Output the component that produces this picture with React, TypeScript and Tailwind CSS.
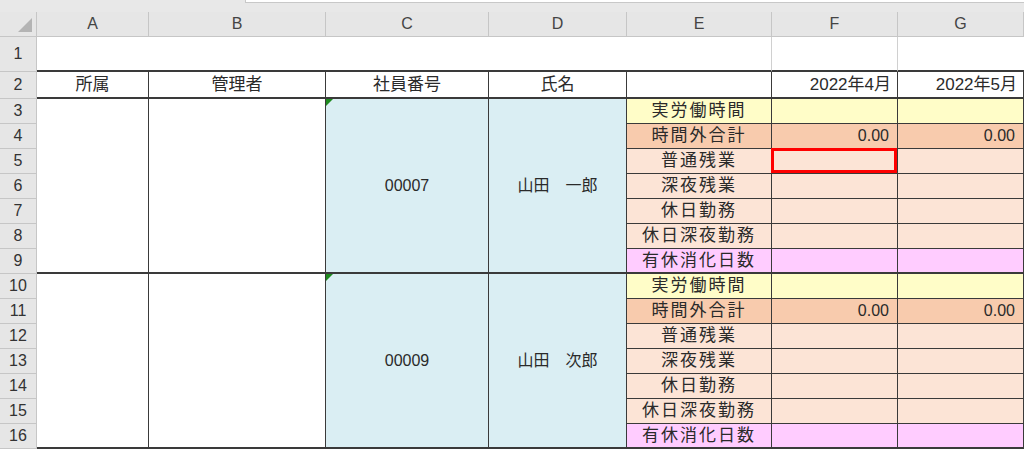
import React from "react";

const labels = ["実労働時間", "時間外合計", "普通残業", "深夜残業", "休日勤務", "休日深夜勤務", "有休消化日数"];
const bgs = ["bg-[#fffdc8]", "bg-[#f8cbad]", "bg-[#fce4d6]", "bg-[#fce4d6]", "bg-[#fce4d6]", "bg-[#fce4d6]", "bg-[#ffccff]"];

const rh = "bg-[#e6e6e6] text-[#333] flex items-center justify-center border-r border-b border-[#c6c6c6] text-[16px]";
const cell = "border-r border-b border-[#3a3a3a] flex items-center";

function Block({ start, id, name }: { start: number; id: string; name: string }) {
  const rows = [];
  for (let i = 0; i < 7; i++) {
    const last = i === 6;
    const bb = last ? "border-b-2" : "";
    rows.push(
      <React.Fragment key={i}>
        <div className={rh}>{start + i}</div>
        {i === 0 && (
          <>
            <div className={`${cell} row-span-7 bg-white border-b-2`}></div>
            <div className={`${cell} row-span-7 bg-white border-b-2`}></div>
            <div className={`${cell} row-span-7 bg-[#daeef3] border-b-2 justify-center relative`}>
              <div className="absolute left-0 top-0 w-0 h-0 border-t-[7px] border-t-[#1e8a1e] border-r-[7px] border-r-transparent" />
              {id}
            </div>
            <div className={`${cell} row-span-7 bg-[#daeef3] border-b-2 justify-center`}>{name}</div>
          </>
        )}
        <div className={`${cell} ${bgs[i]} ${bb} justify-center tracking-[2px] text-[17px]`}>{labels[i]}</div>
        <div className={`${cell} ${bgs[i]} ${bb} justify-end pr-[8px] relative`}>
          {i === 1 ? "0.00" : ""}
          {start === 3 && i === 2 && <div className="absolute -left-[1px] -top-[1px] -right-0 -bottom-0 border-[3px] border-[#ff0000]" />}
        </div>
        <div className={`${cell} ${bgs[i]} ${bb} justify-end pr-[8px]`}>{i === 1 ? "0.00" : ""}</div>
      </React.Fragment>
    );
  }
  return <>{rows}</>;
}

export default function App() {
  return (
    <div className="w-[1024px] h-[449px] overflow-hidden bg-white text-[16px] text-[#2a2a2a]" style={{ fontFamily: '"Liberation Sans","Noto Sans CJK JP",sans-serif' }}>
      <div className="h-[12px] bg-[#e8e8e8] flex">
        <div className="ml-[245px] mt-0 h-[3px] flex-1 bg-white border-b border-l border-[#c8c8c8]" />
      </div>
      <div className="grid grid-cols-[37px_112px_177px_163px_138px_145px_126px_126px] grid-rows-[25px_35px_27px_repeat(14,25px)]">
        <div className={`${rh} relative`}>
          <div className="absolute right-[4px] bottom-[4px] w-0 h-0 border-b-[14px] border-b-[#b4b4b4] border-l-[14px] border-l-transparent" />
        </div>
        {["A", "B", "C", "D", "E", "F", "G"].map((c) => (
          <div key={c} className={`${rh} text-[#444]`}>{c}</div>
        ))}
        <div className={rh}>1</div>
        <div className="col-span-5 border-b-2 border-[#3a3a3a] border-r border-r-[#d0d0d0]" />
        <div className="border-b-2 border-[#3a3a3a] border-r border-r-[#d0d0d0]" />
        <div className="border-b-2 border-[#3a3a3a]" />
        <div className={rh}>2</div>
        {["所属", "管理者", "社員番号", "氏名", "", "2022年4月", "2022年5月"].map((t, i) => (
          <div key={i} className={`${cell} border-b-2 text-[17px] ${i < 5 ? "justify-center" : "justify-end pr-[6px]"}`}>{t}</div>
        ))}
        <Block start={3} id="00007" name="山田　一郎" />
        <Block start={10} id="00009" name="山田　次郎" />
      </div>
    </div>
  );
}
